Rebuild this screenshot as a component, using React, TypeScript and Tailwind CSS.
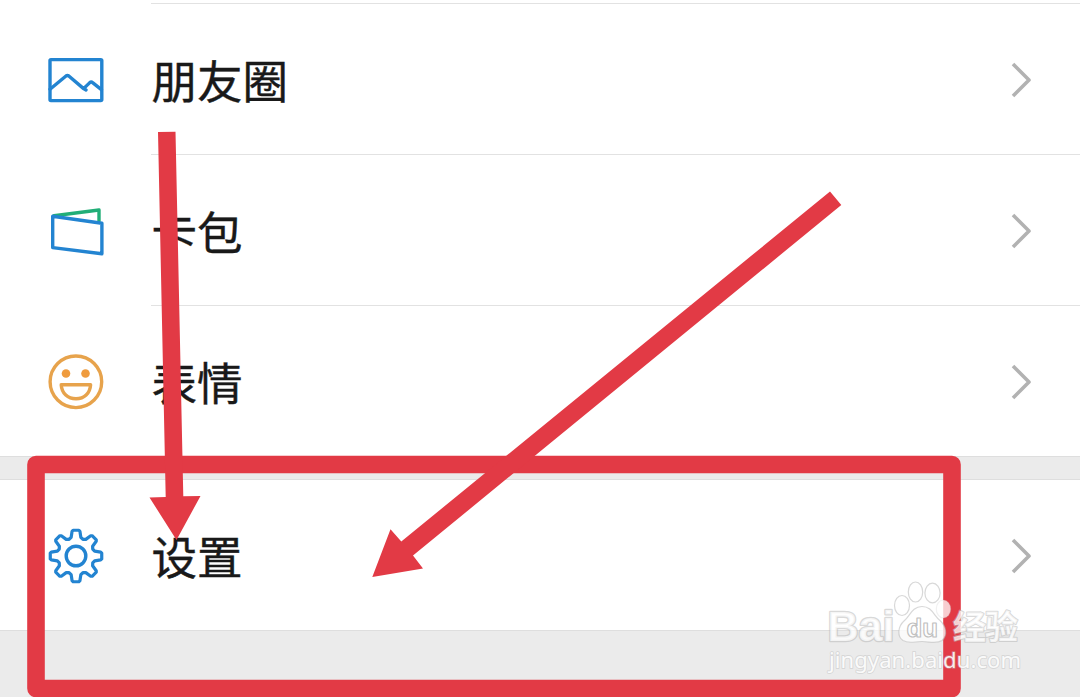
import type { ReactNode } from 'react';

const gearPath = (() => {
  const points: string[] = [];
  for (let i = 0; i < 8; i++) {
    const steps: [number, number][] = [
      [19.3, -14.5],
      [25, -9],
      [25.9, -6.5],
      [25.9, 6.5],
      [25, 9],
      [19.3, 14.5],
      [18.1, 22.5],
    ];
    for (const [r, deg] of steps) {
      const a = ((i * 45 + deg) * Math.PI) / 180;
      points.push(`${(28 + r * Math.sin(a)).toFixed(2)},${(28 - r * Math.cos(a)).toFixed(2)}`);
    }
  }
  return `M${points.join('L')}Z`;
})();

function Icon({ children }: { children: ReactNode }) {
  return (
    <svg
      viewBox="0 0 56 56"
      className="ml-12 h-14 w-14 shrink-0"
      fill="none"
      stroke="#2384d1"
      strokeWidth="3.4"
      strokeLinejoin="round"
      strokeLinecap="round"
    >
      {children}
    </svg>
  );
}

const PhotoIcon = () => (
  <Icon>
    <rect x="2" y="7.6" width="51.8" height="41" rx="1" />
    <path d="M2 37.2L18 24Q19.4 23 20.8 24L35.6 36.6L38 37.9M35.6 36.6L41.8 30.6Q43.2 29.4 44.6 30.6L53.4 37.6" />
  </Icon>
);

const CardsIcon = () => (
  <Icon>
    <path d="M6 12.8L51 7V18" stroke="#21ae77" />
    <path d="M4.7 13.3L53.9 20.2V50.8L4.7 44.6Z" fill="#fff" />
  </Icon>
);

const SmileIcon = () => (
  <Icon>
    <g stroke="#e7a34c">
      <circle cx="27.9" cy="27.8" r="25.8" />
      <circle cx="18" cy="19.5" r="4.3" fill="#ef9b3d" stroke="none" />
      <circle cx="37.5" cy="19.5" r="4.3" fill="#ef9b3d" stroke="none" />
      <path d="M13.2 30.8H42.6C42 39.4 36.2 44.8 28 44.8S13.8 39.4 13.2 30.8Z" />
    </g>
  </Icon>
);

const GearIcon = () => (
  <Icon>
    <path d={gearPath} strokeWidth="3.2" />
    <circle cx="28" cy="28" r="9.8" />
  </Icon>
);

function Row({ icon, label, line = true }: { icon: ReactNode; label: string; line?: boolean }) {
  return (
    <div className="flex h-[151px] shrink-0 items-center bg-white">
      {icon}
      <div
        className={`ml-[47px] flex h-full flex-1 items-center border-b pl-[0.5px] pr-[47px] ${line ? 'border-[#e2e2e2]' : 'border-transparent'}`}
      >
        <span className="flex-1 pt-px text-[45.5px] leading-none text-[#191919] [-webkit-text-stroke:0.4px_#191919]">
          {label}
        </span>
        <svg className="mt-px" width="22" height="36" viewBox="0 0 22 36" fill="none" stroke="#b2b2b2" strokeWidth="3.6">
          <path d="M2 2L18 18L2 34" strokeLinejoin="round" />
        </svg>
      </div>
    </div>
  );
}

function Annotations() {
  return (
    <svg className="absolute inset-0" width="1080" height="697" viewBox="0 0 1080 697" fill="#e23a45">
      <rect x="36" y="464.5" width="916" height="224" fill="none" stroke="#e23a45" strokeWidth="17.6" strokeLinejoin="round" />
      <path d="M158 132L175.5 131.8L183.3 496.3L200.5 496L176.5 540L149.5 497.5L165.7 497Z" />
      <path d="M830 191.5L841.3 205L413 555.5L423 568.5L372.3 577L390.5 529.3L401.3 541.5Z" />
    </svg>
  );
}

function Watermark() {
  return (
    <svg
      className="absolute left-[820px] top-[575px]"
      width="210"
      height="105"
      viewBox="820 575 210 105"
      fill="#ffffff"
      fillOpacity="0.75"
      stroke="#b8b8b8"
      strokeOpacity="0.55"
      strokeWidth="1.2"
      strokeLinejoin="round"
    >
      <text
        x="827.5"
        y="640.5"
        fontSize="43"
        fontWeight="700"
        textLength="67"
        lengthAdjust="spacingAndGlyphs"
        fontFamily="'Liberation Sans', sans-serif"
        paintOrder="stroke"
        strokeWidth="2.6"
      >
        Bai
      </text>
      <ellipse cx="902" cy="605.5" rx="7.5" ry="10" />
      <ellipse cx="915.5" cy="592" rx="7.2" ry="10" />
      <ellipse cx="932.5" cy="593" rx="7.6" ry="9.8" />
      <ellipse cx="943.5" cy="609" rx="7.2" ry="9" strokeOpacity="0.2" />
      <path d="M922 606.5C912 606.5 910 616 904.5 620.5C897 627 897.5 637 903 640.5C909 644 914 641.5 922 641.5C930 641.5 936 644.5 942 640.5C948 635 946 626 940 620.5C934 616 932 606.5 922 606.5Z" />
      <text
        x="906.5"
        y="636.5"
        fontSize="26.5"
        fontWeight="700"
        textLength="31.5"
        lengthAdjust="spacingAndGlyphs"
        fontFamily="'Liberation Sans', sans-serif"
        strokeOpacity="0.9"
      >
        du
      </text>
      <text
        x="953"
        y="638.5"
        fontSize="33"
        fontWeight="700"
        textLength="65"
        fontFamily="'Noto Sans CJK SC', sans-serif"
        paintOrder="stroke"
        strokeWidth="2"
      >
        经验
      </text>
      <text
        x="829"
        y="667.5"
        fontSize="22"
        textLength="192"
        fontFamily="'Noto Sans', sans-serif"
        paintOrder="stroke"
        strokeOpacity="0.4"
        strokeWidth="1.8"
        fillOpacity="0.9"
      >
        jingyan.baidu.com
      </text>
    </svg>
  );
}

export default function App() {
  return (
    <div className="relative flex h-[697px] w-[1080px] flex-col overflow-hidden bg-[#ebebeb] font-['Noto_Sans_CJK_SC',sans-serif]">
      <div className="h-1 shrink-0 bg-white pl-[151px]">
        <div className="h-full border-b border-[#e2e2e2]" />
      </div>
      <Row icon={<PhotoIcon />} label="朋友圈" />
      <Row icon={<CardsIcon />} label="卡包" />
      <Row icon={<SmileIcon />} label="表情" line={false} />
      <div className="-mt-px h-6 shrink-0 border-y border-[#dedede] bg-[#ebebeb]" />
      <Row icon={<GearIcon />} label="设置" line={false} />
      <div className="-mt-px flex-1 border-t border-[#dedede] bg-[#ebebeb]" />
      <Annotations />
      <Watermark />
    </div>
  );
}
